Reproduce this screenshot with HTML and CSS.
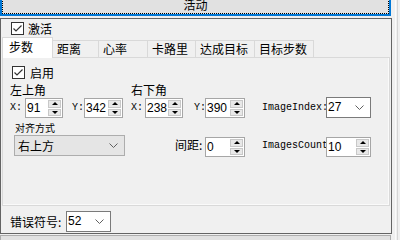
FILE: index.html
```html
<!DOCTYPE html>
<html lang="zh">
<head>
<meta charset="UTF-8">
<title>活动</title>
<link rel="stylesheet" href="styles.css">
</head>
<body>
<div class="screen">
  <div class="main">
    <div class="btn btn-focus"><span class="focus">活动</span></div>

    <div class="frame">
      <label class="chk chk-top">
        <span class="box"><svg width="11" height="11" viewBox="0 0 11 11"><polyline points="1.5,5.5 4,8 9.5,2.5" fill="none" stroke="#333" stroke-width="1.2"/></svg></span>
        激活
      </label>

      <div class="tabctl">
        <div class="tabs">
          <div class="tab on">步数</div>
          <div class="tab">距离</div>
          <div class="tab">心率</div>
          <div class="tab">卡路里</div>
          <div class="tab">达成目标</div>
          <div class="tab">目标步数</div>
        </div>

        <div class="page">
          <label class="chk chk-en">
            <span class="box"><svg width="11" height="11" viewBox="0 0 11 11"><polyline points="1.5,5.5 4,8 9.5,2.5" fill="none" stroke="#333" stroke-width="1.2"/></svg></span>
            启用
          </label>

          <div class="heads">
            <span class="head-left">左上角</span>
            <span>右下角</span>
          </div>

          <div class="coords">
            <span class="mono lab-x1">X:</span>
            <div class="spin w38"><span class="val">91</span><span class="arrows"><i><b class="up"></b></i><i><b class="dn"></b></i></span></div>
            <span class="mono lab-y1">Y:</span>
            <div class="spin w39"><span class="val">342</span><span class="arrows"><i><b class="up"></b></i><i><b class="dn"></b></i></span></div>
            <span class="mono lab-x2">X:</span>
            <div class="spin w38"><span class="val">238</span><span class="arrows"><i><b class="up"></b></i><i><b class="dn"></b></i></span></div>
            <span class="mono lab-y2">Y:</span>
            <div class="spin w40"><span class="val">390</span><span class="arrows"><i><b class="up"></b></i><i><b class="dn"></b></i></span></div>
            <span class="mono lab-idx">ImageIndex:</span>
            <div class="combo w45"><span class="val">27</span><svg width="9" height="5" viewBox="0 0 9 5"><polyline points="0.5,0.5 4.5,4.5 8.5,0.5" fill="none" stroke="#606060"/></svg></div>
          </div>

          <div class="aligns">
            <div class="align-col">
              <span class="small">对齐方式</span>
              <div class="combo flat"><span>右上方</span><svg width="9" height="5" viewBox="0 0 9 5"><polyline points="0.5,0.5 4.5,4.5 8.5,0.5" fill="none" stroke="#606060"/></svg></div>
            </div>
            <span class="lab-gap">间距:</span>
            <div class="spin w40 low"><span class="val">0</span><span class="arrows"><i><b class="up"></b></i><i><b class="dn"></b></i></span></div>
            <span class="mono lab-cnt">ImagesCount</span>
            <div class="spin w45 low"><span class="val">10</span><span class="arrows"><i><b class="up"></b></i><i><b class="dn"></b></i></span></div>
          </div>
        </div>
      </div>

      <div class="err">
        <span class="err-lab">错误符号:</span>
        <div class="combo w45"><span class="val">52</span><svg width="9" height="5" viewBox="0 0 9 5"><polyline points="0.5,0.5 4.5,4.5 8.5,0.5" fill="none" stroke="#606060"/></svg></div>
      </div>
    </div>

    <div class="btn next">其他</div>
  </div>
  <div class="edge"></div>
</div>
</body>
</html>
```

FILE: styles.css
```css
body {
  margin: 0;
  background: #f0f0f0;
  color: #000;
  font: 12px "Noto Sans CJK SC", sans-serif;
  overflow: hidden;
}

.screen {
  display: flex;
  margin-top: -7px;
  height: 247px;
}

.main {
  width: 392px;
  display: flex;
  flex-direction: column;
}

.edge {
  margin-left: 3px;
  width: 1px;
  border-left: 1px solid #fbfbfb;
  border-right: 1px solid #d6d6d6;
}

/* buttons */
.btn {
  box-sizing: border-box;
  width: 391px;
  height: 23px;
  flex: none;
  border: 1px solid #adadad;
  background: #e1e1e1;
  display: flex;
  align-items: center;
  justify-content: center;
}

.btn-focus {
  border: 2px solid #0078d7;
  align-items: stretch;
}

.focus {
  flex: 1;
  border: 1px dotted #000;
  display: flex;
  align-items: center;
  justify-content: center;
}

.next {
  margin-top: 1px;
}

/* outer panel */
.frame {
  box-sizing: border-box;
  width: 392px;
  height: 216px;
  flex: none;
  margin-top: 2px;
  border: 1px solid #646464;
  display: flex;
  flex-direction: column;
}

.chk {
  display: flex;
  align-items: center;
  height: 13px;
  line-height: 13px;
}

.box {
  box-sizing: border-box;
  width: 13px;
  height: 13px;
  border: 1px solid #333;
  background: #fff;
  display: flex;
  align-items: center;
  justify-content: center;
  margin-right: 4px;
}

.chk-top {
  margin: 3px 0 0 10px;
}

.chk-en {
  margin: 8px 0 0 9px;
}

.chk-en .box {
  margin-right: 5px;
}

/* tabs */
.tabctl {
  margin: 2px 0 0 1px;
  width: 388px;
}

.tabs {
  display: flex;
  align-items: flex-end;
  height: 21px;
  margin-bottom: -1px;
  position: relative;
  z-index: 1;
}

.tab {
  box-sizing: border-box;
  height: 17px;
  margin-bottom: 1px;
  border-top: 1px solid #d9d9d9;
  border-right: 1px solid #d9d9d9;
  background: #f0f0f0;
  padding-left: 4px;
  line-height: 15px;
  white-space: nowrap;
}

.tab.on {
  height: 21px;
  margin-bottom: 0;
  border-left: 1px solid #d9d9d9;
  background: #fff;
  padding-left: 6px;
  line-height: 17px;
}

.tab:nth-child(1) { width: 51px; }
.tab:nth-child(2) { width: 46px; }
.tab:nth-child(3) { width: 49px; }
.tab:nth-child(4) { width: 48px; }
.tab:nth-child(5) { width: 59px; }
.tab:nth-child(6) { width: 59px; }

.page {
  box-sizing: border-box;
  height: 149px;
  border: 1px solid #d9d9d9;
  background: #f0f0f0;
  box-shadow: inset -1px -1px 0 #fafafa;
}

.heads {
  display: flex;
  margin-top: 4px;
  padding-left: 7px;
  line-height: 14px;
}

.head-left {
  width: 121px;
}

.mono {
  font-family: "Liberation Mono", monospace;
  font-size: 10px;
  white-space: nowrap;
}

.coords {
  display: flex;
  align-items: flex-end;
  height: 21px;
  padding-left: 7px;
}

.coords .mono {
  align-self: center;
}

.lab-x1 { width: 15px; }
.lab-y1 { width: 12px; margin-left: 9px; }
.lab-x2 { width: 14px; margin-left: 8px; }
.lab-y2 { width: 11px; margin-left: 11px; }
.lab-idx { width: 64px; margin-left: 17px; }

/* numeric up-down */
.spin {
  box-sizing: border-box;
  height: 20px;
  border: 1px solid #a6a6a6;
  background: #fff;
  display: flex;
}

.w38 { width: 38px; }
.w39 { width: 39px; }
.w40 { width: 40px; }
.w45 { width: 45px; }

.val {
  flex: 1;
  padding-left: 1px;
  font-family: "Liberation Sans", sans-serif;
  font-size: 12px;
  line-height: 18px;
}

.arrows {
  width: 13px;
  padding: 1px 1px 1px 0;
  display: flex;
  flex-direction: column;
  gap: 1px;
}

.arrows i {
  flex: 1;
  background: #e8e8e8;
  border: 1px solid #c8c8c8;
  display: flex;
  align-items: center;
  justify-content: center;
}

.up {
  border-left: 3px solid transparent;
  border-right: 3px solid transparent;
  border-bottom: 3px solid #000;
}

.dn {
  border-left: 3px solid transparent;
  border-right: 3px solid transparent;
  border-top: 3px solid #000;
}

/* combo boxes */
.combo {
  box-sizing: border-box;
  height: 21px;
  border: 1px solid #7a7a7a;
  background: #fff;
  display: flex;
  align-items: center;
  padding-right: 6px;
}

.combo .val {
  line-height: 19px;
}

.combo.flat {
  width: 111px;
  background: #e5e5e5;
  border-color: #adadad;
  padding-left: 3px;
  justify-content: space-between;
}

.aligns {
  display: flex;
  align-items: flex-end;
  margin-top: 3px;
  padding-left: 11px;
}

.align-col {
  width: 111px;
  display: flex;
  flex-direction: column;
}

.small {
  font-size: 10px;
  line-height: 14px;
  padding-left: 1px;
}

.lab-gap {
  width: 30px;
  margin-left: 50px;
  line-height: 20px;
  margin-bottom: 1px;
}

.lab-cnt {
  width: 64px;
  margin-left: 17px;
  line-height: 20px;
  margin-bottom: 0;
}

.low {
  margin-bottom: -1px;
}

/* bottom row */
.err {
  display: flex;
  align-items: center;
  height: 21px;
  margin: 5px 0 0 9px;
}

.err-lab {
  width: 56px;
}
```
